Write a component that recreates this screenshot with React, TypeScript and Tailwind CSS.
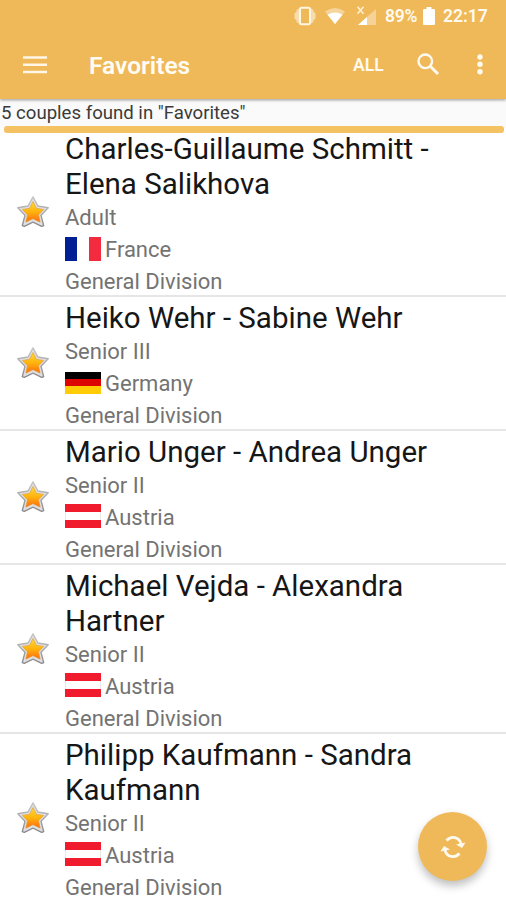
import React from "react";

type Country = "France" | "Germany" | "Austria";
type Couple = { lines: string[]; age: string; country: Country };

const couples: Couple[] = [
  { lines: ["Charles-Guillaume Schmitt -", "Elena Salikhova"], age: "Adult", country: "France" },
  { lines: ["Heiko Wehr - Sabine Wehr"], age: "Senior III", country: "Germany" },
  { lines: ["Mario Unger - Andrea Unger"], age: "Senior II", country: "Austria" },
  { lines: ["Michael Vejda - Alexandra", "Hartner"], age: "Senior II", country: "Austria" },
  { lines: ["Philipp Kaufmann - Sandra", "Kaufmann"], age: "Senior II", country: "Austria" },
];

function Flag({ country }: { country: Country }) {
  if (country === "France")
    return (
      <span className="mb-0.5 flex h-6 w-9 shrink-0">
        <span className="flex-1 bg-[#001f93]" />
        <span className="flex-1 bg-white" />
        <span className="flex-1 bg-[#f42a3e]" />
      </span>
    );
  if (country === "Germany")
    return (
      <span className="mb-0.5 flex h-[22px] w-9 shrink-0 flex-col">
        <span className="flex-1 bg-black" />
        <span className="flex-1 bg-[#dc0503]" />
        <span className="flex-1 bg-[#ffcc05]" />
      </span>
    );
  return (
    <span className="mb-[3px] flex h-6 w-9 shrink-0 flex-col">
      <span className="flex-1 bg-[#f01c2e]" />
      <span className="flex-1 border-x border-[#e8e8e8] bg-white" />
      <span className="flex-1 bg-[#f01c2e]" />
    </span>
  );
}

function Star() {
  return (
    <svg className="h-[34px] w-[34px] shrink-0" viewBox="0 0 34 34">
      <defs>
        <linearGradient id="gold" x1="0" y1="0" x2="0" y2="1">
          <stop offset="0" stopColor="#ffd83a" />
          <stop offset=".5" stopColor="#ffb40c" />
          <stop offset="1" stopColor="#ff6a10" />
        </linearGradient>
        <linearGradient id="silver" x1="0" y1="0" x2="0" y2="1">
          <stop offset="0" stopColor="#c8c8c8" />
          <stop offset="1" stopColor="#8b8b90" />
        </linearGradient>
      </defs>
      <path d="M17 1.800l4.900 9.200 10.300 1.800-7.200 7.400 2.700 10.400-2 .7L17 27.200l-8.700 4.100-2-.7L9 20.200 1.800 12.800 12.100 11z" fill="#e0e0e2" stroke="url(#silver)" strokeWidth="1.400" strokeLinejoin="round" />
      <path d="M17 6.500l3.500 6.800 7.200 1.100-5.100 5.300 1.600 7.500-7.200-3.500-7.200 3.500 1.600-7.500-5.100-5.300 7.200-1.100z" fill="url(#gold)" stroke="#dd9b35" strokeWidth=".6" strokeLinejoin="round" />
    </svg>
  );
}

function StatusBar() {
  return (
    <div className="flex h-8 items-center text-[17.5px] font-semibold leading-8 text-[#fffaf0]">
      <svg className="ml-[294px] h-[22px] w-[22px]" viewBox="0 0 22 22" fill="none">
        <path d="M5 3.500L2.500 5v2L.5 8v6l2 1v2L5 18.500zM17 3.500L19.500 5v2l2 1v6l-2 1v2L17 18.500z" fill="#fff" fillOpacity=".5" />
        <rect x="6" y="2.800" width="10" height="16.400" rx="1.500" stroke="#fff6e4" strokeWidth="2" />
      </svg>
      <svg className="ml-[9px] h-[18px] w-[20px]" viewBox="0 0 20 18">
        <path d="M0 4.500Q10-2.500 20 4.500L10 17z" fill="#fff" fillOpacity=".4" />
        <path d="M2.500 7.700Q10 3.200 17.500 7.700L10 17z" fill="#fff" />
      </svg>
      <svg className="ml-[11px] h-[21px] w-[21px]" viewBox="0 0 21 21">
        <path d="M20 3v16H2z" fill="#fff" fillOpacity=".38" />
        <path d="M11 11v8H2z" fill="#fff" />
        <path d="M1.500 .8l6 7M7.500 .8l-6 7" stroke="#fff1d5" strokeWidth="1.500" />
      </svg>
      <span className="ml-[8px] w-[34px] whitespace-nowrap tracking-[-0.3px]">89%</span>
      <svg className="ml-[4px] h-[18px] w-3" viewBox="0 0 12 18">
        <path d="M3.500 0h5v2H11q1 0 1 1v14q0 1-1 1H1q-1 0-1-1V3q0-1 1-1h2.500z" fill="#fff" />
      </svg>
      <span className="ml-[8px]">22:17</span>
    </div>
  );
}

export default function App() {
  return (
    <div className="relative h-[900px] w-[506px] overflow-hidden bg-white font-[Roboto,sans-serif]">
      <header className="relative h-[99px] bg-[#efb959] shadow-[0_1px_3px_rgba(0,0,0,0.4)]">
        <StatusBar />
        <div className="flex h-[66px] items-center text-white">
          <svg className="ml-[23px] h-[18px] w-6" viewBox="0 0 24 18">
            <path d="M0 1.500h24M0 8.700h24M0 16h24" stroke="#fff6e6" strokeWidth="2.600" />
          </svg>
          <h1 className="ml-[42px] w-[264px] pt-px text-[24.5px] font-semibold leading-[64px] text-[#fffcf5]">Favorites</h1>
          <span className="w-[64px] text-[17.500px] font-semibold text-[#fffaf0]">ALL</span>
          <svg className="mb-0.5 h-[23px] w-[23px]" viewBox="0 0 23 23" fill="none" stroke="#fffaf0">
            <circle cx="8.300" cy="8.300" r="6.800" strokeWidth="2.400" />
            <path d="M13.500 13.500l7.500 7.500" strokeWidth="3" />
          </svg>
          <svg className="mb-px ml-[37px] h-[21px] w-[6px]" viewBox="0 0 6 21" fill="#fffaf0">
            <circle cx="3" cy="3" r="2.700" /><circle cx="3" cy="10.300" r="2.700" /><circle cx="3" cy="17.700" r="2.700" />
          </svg>
        </div>
      </header>
      <div className="h-[29px] bg-[#fafafa] pl-px pt-px text-[18.600px] leading-[26px] text-[#3a3a3a]">
        5 couples found in "Favorites"
        <div className="ml-[3px] mr-[2px] h-[7px] rounded-[3px] bg-[#f4c163]" />
      </div>
      <main>
        {couples.map((couple) => (
          <article
            key={couple.lines[0]}
            className={`flex items-center border-b-2 border-[#e6e6e6] ${couple.lines.length === 2 ? "h-[169px]" : "h-[134px]"}`}
          >
            <div className="flex w-[65px] shrink-0 pl-4"><Star /></div>
            <div className="h-full pt-1">
              <h2 className="whitespace-nowrap text-[29.500px] leading-[35px] text-[#161616]">
                {couple.lines.map((line) => <span key={line} className="block">{line}</span>)}
              </h2>
              <div className="text-[22px] leading-[31.700px] text-[#737373]">
                <p>{couple.age}</p>
                <p className="flex items-center gap-1"><Flag country={couple.country} />{couple.country}</p>
                <p className="pt-px leading-[31px]">General Division</p>
              </div>
            </div>
          </article>
        ))}
      </main>
      <button className="absolute left-[418px] top-[812px] flex h-[69px] w-[69px] items-center justify-center rounded-full bg-[#efb959] shadow-[0_5px_9px_rgba(0,0,0,0.25)]" aria-label="Refresh">
        <svg className="h-[24px] w-[26px]" viewBox="0 0 26 24" fill="none" stroke="#fffaf0" strokeWidth="2.800">
          <path d="M6.500 5.500C11 .5 19.500 1.500 21 9" />
          <path d="M19.500 18.500C15 23.500 6.500 22.500 5 15" />
          <path d="M16 9.500l9.500-2L22 13zM10 14.500l-9.500 2L4 11z" fill="#fffaf0" stroke="none" />
        </svg>
      </button>
    </div>
  );
}
